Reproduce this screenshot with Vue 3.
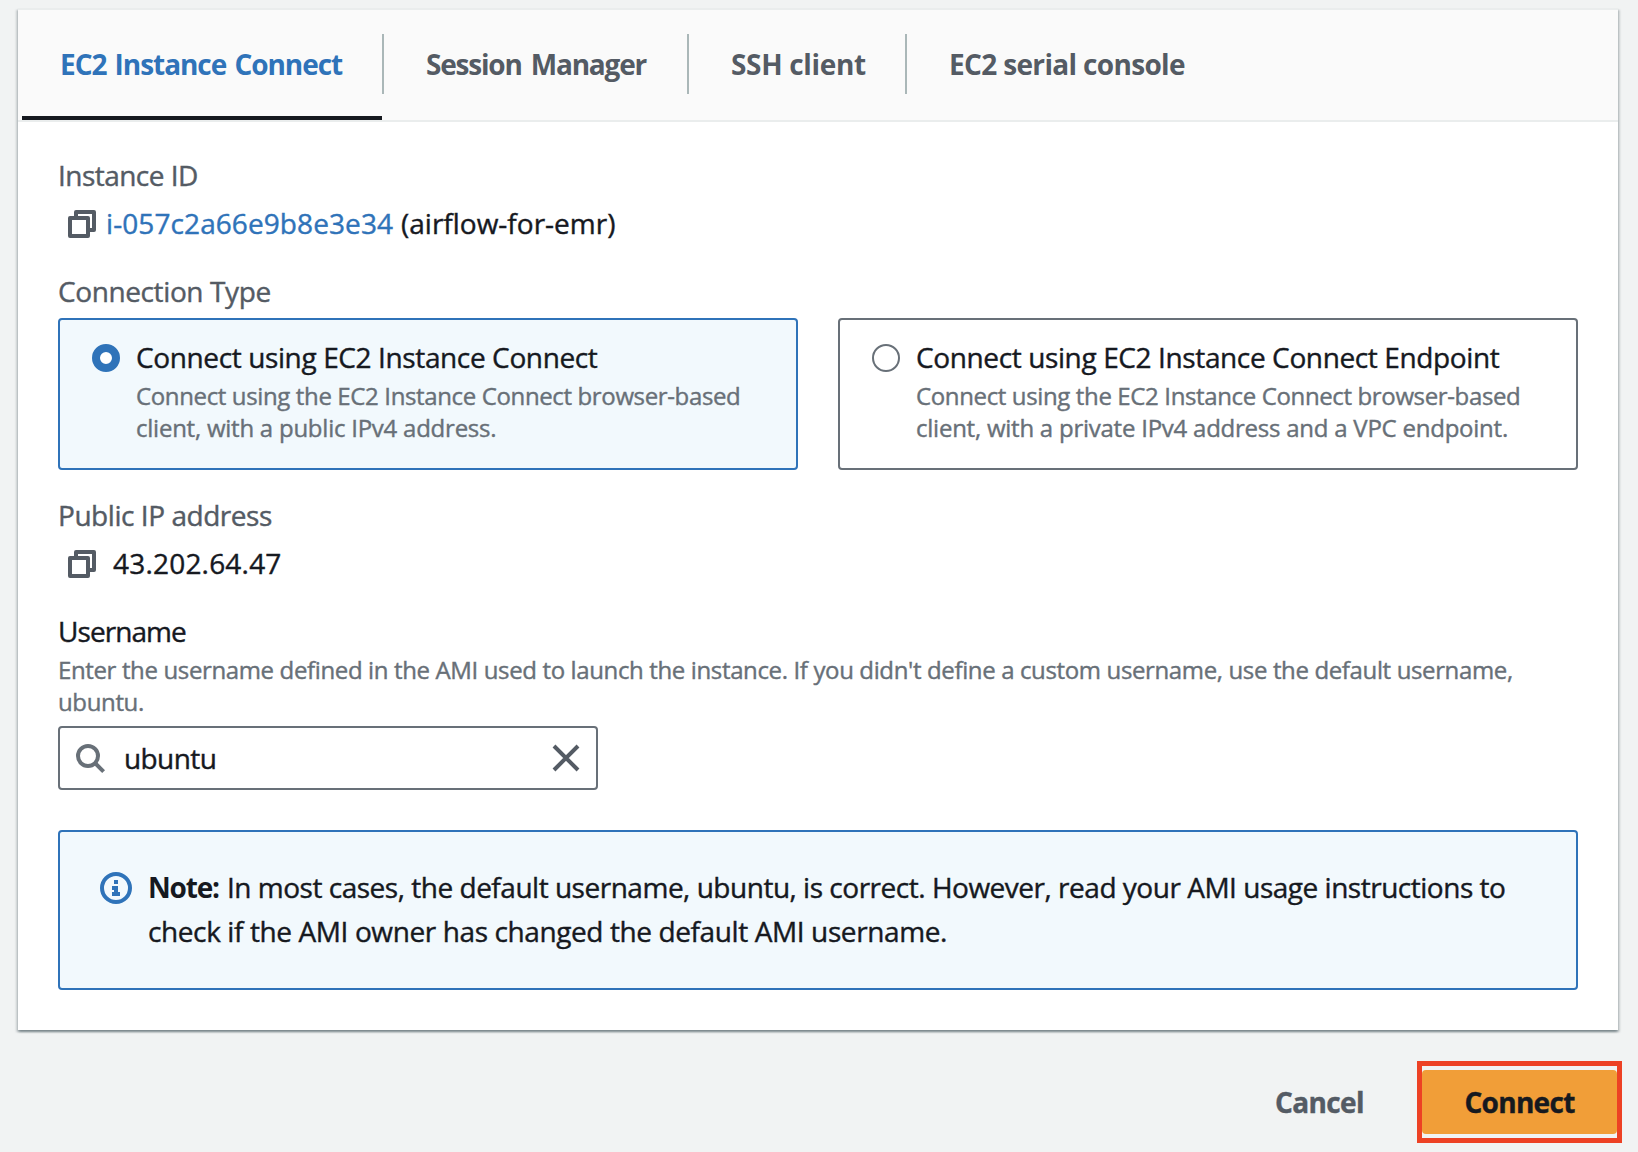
<script setup>
import { ref } from 'vue'

const tabs = [
  { id: 'eic', label: 'EC2 Instance Connect' },
  { id: 'session', label: 'Session Manager' },
  { id: 'ssh', label: 'SSH client' },
  { id: 'serial', label: 'EC2 serial console' }
]
const activeTab = ref('eic')

const options = [
  {
    id: 'direct',
    title: 'Connect using EC2 Instance Connect',
    lines: ['Connect using the EC2 Instance Connect browser-based', 'client, with a public IPv4 address.']
  },
  {
    id: 'endpoint',
    title: 'Connect using EC2 Instance Connect Endpoint',
    lines: ['Connect using the EC2 Instance Connect browser-based', 'client, with a private IPv4 address and a VPC endpoint.']
  }
]
const selected = ref('direct')
const username = ref('ubuntu')
</script>

<template>
  <main class="page">
    <section class="card">
      <nav class="tabs">
        <div
          v-for="tab in tabs"
          :key="tab.id"
          class="tab"
          :class="[tab.id, { active: tab.id === activeTab }]"
          @click="activeTab = tab.id"
        >
          <span class="tab-label">{{ tab.label }}</span>
        </div>
      </nav>

      <div class="body">
        <div class="label instance-label">Instance ID</div>
        <div class="value-row">
          <svg class="copy" viewBox="0 0 28 28" fill="none" stroke="#545b64" stroke-width="4" stroke-linejoin="round">
            <rect x="2" y="8" width="18" height="18" />
            <path d="M8 6V2h18v18h-4" />
          </svg>
          <a class="link">i-057c2a66e9b8e3e34</a>
          <span class="name">(airflow-for-emr)</span>
        </div>

        <div class="label type-label">Connection Type</div>
        <div class="tiles">
          <div
            v-for="option in options"
            :key="option.id"
            class="tile"
            :class="{ selected: option.id === selected }"
            @click="selected = option.id"
          >
            <span class="radio"></span>
            <div class="tile-text">
              <div class="tile-title">{{ option.title }}</div>
              <div class="tile-desc">
                <div v-for="(line, i) in option.lines" :key="line" :class="'line' + i">{{ line }}</div>
              </div>
            </div>
          </div>
        </div>

        <div class="label ip-label">Public IP address</div>
        <div class="value-row">
          <svg class="copy" viewBox="0 0 28 28" fill="none" stroke="#545b64" stroke-width="4" stroke-linejoin="round">
            <rect x="2" y="8" width="18" height="18" />
            <path d="M8 6V2h18v18h-4" />
          </svg>
          <span class="ip">43.202.64.47</span>
        </div>

        <div class="label user-label">Username</div>
        <div class="hint">
          <div>Enter the username defined in the AMI used to launch the instance. If you didn't define a custom username, use the default username,</div>
          <div>ubuntu.</div>
        </div>
        <div class="input">
          <svg class="search" viewBox="0 0 30 30" fill="none" stroke="#687078" stroke-width="4">
            <circle cx="12" cy="12" r="10" />
            <path d="M19 19l8.6 8.6" />
          </svg>
          <span class="input-text">{{ username }}</span>
          <svg class="clear" viewBox="0 0 28 28" fill="none" stroke="#545b64" stroke-width="4">
            <path d="M2 2l24 24M26 2L2 26" />
          </svg>
        </div>

        <div class="note">
          <svg class="info" viewBox="0 0 32 32">
            <circle cx="16" cy="16" r="14" fill="none" stroke="#2f73b9" stroke-width="4" />
            <path d="M14 8h4v4h-4zM12 14h6v6h2v4h-8v-4h2v-2h-2z" fill="#2f73b9" />
          </svg>
          <div class="note-text">
            <div class="note-first"><b>Note:</b><span>In most cases, the default username, ubuntu, is correct. However, read your AMI usage instructions to</span></div>
            <div class="note-second">check if the AMI owner has changed the default AMI username.</div>
          </div>
        </div>
      </div>
    </section>

    <footer class="actions">
      <button class="cancel">Cancel</button>
      <div class="highlight"><button class="connect">Connect</button></div>
    </footer>
  </main>
</template>

<style>
body {
  margin: 0;
  background: #f1f3f3;
}
</style>

<style scoped>
.page {
  box-sizing: border-box;
  width: 1638px;
  height: 1152px;
  overflow: hidden;
  padding: 8px 20px 0 18px;
  background: #f1f3f3;
  color: #16191f;
  font: 28px/36px "Open Sans", "Noto Sans", sans-serif;
  -webkit-text-stroke: 0.4px;
  white-space: nowrap;
}
.card {
  box-sizing: border-box;
  height: 1022px;
  background: #fff;
  border-top: 2px solid #eaeded;
  box-shadow: 0 2px 2px 0 rgba(0, 28, 36, 0.3), 2px 2px 2px 0 rgba(0, 28, 36, 0.15), -2px 2px 2px 0 rgba(0, 28, 36, 0.15);
}
.tabs {
  display: flex;
  height: 110px;
  padding-left: 4px;
  background: #fafafa;
  border-bottom: 2px solid #eaeded;
}
.tab {
  box-sizing: border-box;
  height: 110px;
  padding-top: 24px;
  color: #545b64;
  font-weight: 700;
  -webkit-text-stroke: 0;
}
.tab-label {
  display: block;
  box-sizing: border-box;
  height: 60px;
  line-height: 60px;
  border-right: 2px solid #aab7b8;
}
.eic { width: 362px; letter-spacing: -1.05px; word-spacing: 2px; }
.eic .tab-label { padding-left: 38px; }
.session { width: 305px; letter-spacing: -1.2px; word-spacing: 3px; }
.session .tab-label { padding-left: 42px; }
.ssh { width: 218px; letter-spacing: -0.33px; }
.ssh .tab-label { padding-left: 42px; }
.serial { letter-spacing: -0.658px; }
.serial .tab-label { padding-left: 42px; border-right: 0; }
.tab.active {
  color: #2f73b9;
  background: linear-gradient(#16191f, #16191f) left bottom / 360px 4px no-repeat;
}
.body {
  padding: 35px 40px 0;
}
.label {
  color: #545b64;
}
.instance-label { letter-spacing: -0.53px; }
.type-label { margin-top: 32px; letter-spacing: -0.39px; }
.ip-label { margin-top: 27px; letter-spacing: -0.452px; }
.user-label { margin-top: 32px; color: #16191f; letter-spacing: -0.939px; }
.value-row {
  display: flex;
  margin-top: 12px;
  padding-left: 10px;
}
.copy {
  width: 28px;
  height: 28px;
  margin-top: 5px;
}
.link {
  width: 295px;
  margin-left: 10px;
  color: #2f73b9;
  letter-spacing: 0.086px;
}
.name { letter-spacing: 0; }
.ip { margin-left: 17px; letter-spacing: 0.2px; }
.tiles {
  display: grid;
  grid-template-columns: 740px 740px;
  gap: 40px;
  margin-top: 9px;
}
.tile {
  box-sizing: border-box;
  display: flex;
  gap: 16px;
  height: 152px;
  padding: 19px 0 0 32px;
  border: 2px solid #687078;
  border-radius: 4px;
}
.tile.selected {
  border-color: #2f73b9;
  background: #f2f9fd;
}
.radio {
  box-sizing: border-box;
  width: 28px;
  height: 28px;
  margin-top: 5px;
  border: 2px solid #687078;
  border-radius: 50%;
  background: #fff;
}
.selected .radio {
  border: 8px solid #2f73b9;
}
.tile-title { letter-spacing: -0.38px; }
.tile-desc {
  margin-top: 5px;
  color: #687078;
  font-size: 24px;
  line-height: 32px;
}
.line0 { letter-spacing: -0.365px; }
.line1 { letter-spacing: -0.24px; }
.hint {
  margin-top: 5px;
  color: #687078;
  font-size: 24px;
  line-height: 32px;
  letter-spacing: -0.366px;
}
.input {
  box-sizing: border-box;
  display: flex;
  align-items: flex-start;
  width: 540px;
  height: 64px;
  margin-top: 8px;
  padding: 0 16px;
  border: 2px solid #687078;
  border-radius: 4px;
}
.search {
  width: 30px;
  height: 30px;
  margin-top: 16px;
}
.input-text {
  flex: 1;
  margin: 12px 0 0 18px;
  letter-spacing: -0.6px;
}
.clear {
  width: 28px;
  height: 28px;
  margin-top: 16px;
}
.note {
  box-sizing: border-box;
  display: flex;
  height: 160px;
  margin-top: 40px;
  padding: 33px 0 0 40px;
  border: 2px solid #2f73b9;
  border-radius: 4px;
  background: #f2f9fd;
}
.info {
  width: 32px;
  height: 32px;
  margin-top: 7px;
}
.note-text {
  margin-left: 16px;
  line-height: 44px;
}
.note-first { display: flex; letter-spacing: -0.484px; }
.note-first b {
  width: 79px;
  font-weight: 700;
  letter-spacing: -1.199px;
  -webkit-text-stroke: 0;
}
.note-second { letter-spacing: -0.394px; }
.actions {
  display: flex;
  justify-content: flex-end;
  margin: 31px -4px 0 0;
}
button {
  padding: 0;
  border: 0;
  background: none;
  font: 700 28px/36px "Open Sans", "Noto Sans", sans-serif;
}
.cancel {
  width: 88px;
  height: 36px;
  margin: 23px 54px 0 0;
  color: #545b64;
  text-align: left;
  letter-spacing: -0.62px;
}
.highlight {
  box-sizing: border-box;
  width: 205px;
  height: 82px;
  padding: 4px 0;
  border: 5px solid #ed4124;
}
.connect {
  display: block;
  width: 195px;
  height: 64px;
  border-radius: 4px;
  background: #f19e38;
  color: #16191f;
  letter-spacing: -0.7px;
}
</style>
